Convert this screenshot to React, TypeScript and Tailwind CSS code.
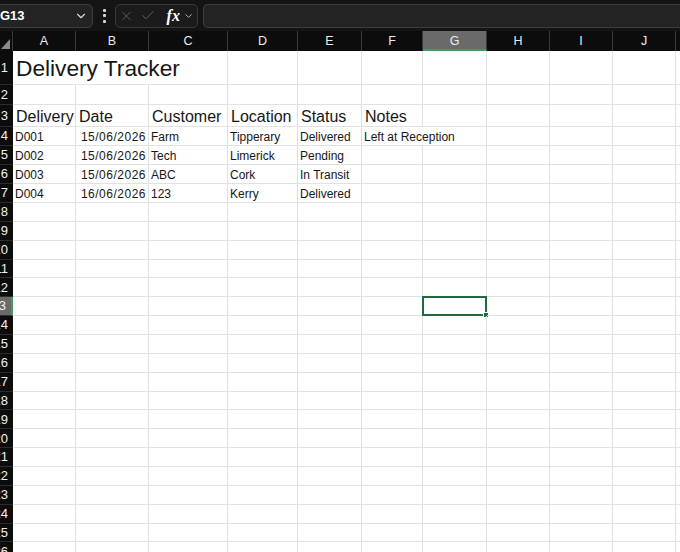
import { X, Check, ChevronDown } from "lucide-react";

type CellDef = { text?: string; span?: number; kind?: "title" | "head" | "data" | "date" };

const COLS = ["A", "B", "C", "D", "E", "F", "G", "H", "I", "J"];
const WIDTHS = [63, 73, 79, 70, 64, 61, 64, 63, 63, 63];

// row definitions: number, height class, cells from column A onwards
const ROWS: { n: number; h: string; cells: CellDef[] }[] = [
  { n: 1, h: "h-[34px]", cells: [{ text: "Delivery Tracker", span: 3, kind: "title" }] },
  { n: 2, h: "h-[20px]", cells: [] },
  {
    n: 3,
    h: "h-[22px]",
    cells: ["Delivery", "Date", "Customer", "Location", "Status", "Notes"].map((t) => ({ text: t, kind: "head" as const })),
  },
  {
    n: 4,
    h: "h-[19px]",
    cells: [
      { text: "D001" },
      { text: "15/06/2026", kind: "date" },
      { text: "Farm" },
      { text: "Tipperary" },
      { text: "Delivered" },
      { text: "Left at Reception", span: 2 },
    ],
  },
  {
    n: 5,
    h: "h-[19px]",
    cells: [{ text: "D002" }, { text: "15/06/2026", kind: "date" }, { text: "Tech" }, { text: "Limerick" }, { text: "Pending" }],
  },
  {
    n: 6,
    h: "h-[19px]",
    cells: [{ text: "D003" }, { text: "15/06/2026", kind: "date" }, { text: "ABC" }, { text: "Cork" }, { text: "In Transit" }],
  },
  {
    n: 7,
    h: "h-[19px]",
    cells: [{ text: "D004" }, { text: "16/06/2026", kind: "date" }, { text: "123" }, { text: "Kerry" }, { text: "Delivered" }],
  },
  ...Array.from({ length: 19 }, (_, i) => ({ n: 8 + i, h: "h-[18.87px]", cells: [] as CellDef[] })),
];

function textClass(kind?: CellDef["kind"]) {
  if (kind === "title") return "text-[22.7px] leading-none pl-[3px] pb-[4px]";
  if (kind === "head") return "text-[16px] leading-none pl-[3px] pb-[1px]";
  if (kind === "date") return "text-[12px] leading-none tracking-[0.5px] justify-end pr-[2px] pb-[2px]";
  return "text-[12px] leading-none pl-[2px] pb-[2px]";
}

function SheetRow({ n, h, cells }: { n: number; h: string; cells: CellDef[] }) {
  const selected = n === 13;
  const out: React.ReactNode[] = [];
  let col = 0;
  let ci = 0;
  while (col < COLS.length) {
    const def = cells[ci] ?? {};
    const span = def.span ?? 1;
    const w = WIDTHS.slice(col, col + span).reduce((a, b) => a + b, 0);
    const isSel = selected && COLS[col] === "G";
    out.push(
      <div
        key={col}
        style={{ width: w }}
        className={`relative shrink-0 flex items-end whitespace-nowrap border-r border-b border-[#e1e1e1] text-[#161616] ${textClass(def.kind)}`}
      >
        {def.text}
        {isSel && (
          <>
            <div className="absolute -left-px -top-px -right-px -bottom-px border-2 border-[#1f6b3d]" />
            <div className="absolute -right-[3px] -bottom-[3px] w-[6px] h-[6px] bg-[#1f6b3d] border border-white" />
          </>
        )}
      </div>
    );
    col += span;
    ci += 1;
  }
  return (
    <div className={`flex ${h}`}>
      <div
        className={`w-[13px] shrink-0 flex items-center justify-end pr-[5px] overflow-hidden text-[13px] text-[#f0f0f0] border-b border-[#2c2c2c] ${
          selected ? "bg-[#6a6a6a] border-r-2 border-r-[#3f9a60]" : "bg-[#0c0c0c]"
        }`}
      >
        {n}
      </div>
      {out}
      <div className="flex-1 border-b border-[#e1e1e1]" />
    </div>
  );
}

export default function App() {
  return (
    <div className="w-[680px] h-[552px] overflow-hidden bg-white font-['Liberation_Sans',Arial,sans-serif]">
      {/* Toolbar: name box + formula bar */}
      <div className="h-[31px] bg-[#141414] flex items-center">
        <div className="ml-[-6px] w-[99px] h-[24px] shrink-0 rounded-[5px] border border-[#3e3e3e] bg-[#232323] flex items-center justify-between pl-[5px] pr-[4px]">
          <span className="text-[13px] font-bold text-white">G13</span>
          <ChevronDown size={14} strokeWidth={2} className="text-[#d8d8d8]" />
        </div>
        <div className="w-[22px] shrink-0 flex flex-col items-center gap-[2.5px]">
          <span className="w-[3px] h-[3px] bg-[#d6d6d6] rounded-[1px]" />
          <span className="w-[3px] h-[3px] bg-[#d6d6d6] rounded-[1px]" />
          <span className="w-[3px] h-[3px] bg-[#d6d6d6] rounded-[1px]" />
        </div>
        <div className="w-[83px] h-[24px] shrink-0 rounded-[5px] border border-[#3a3a3a] bg-[#1b1b1b] flex items-center pl-[3px] pr-[3px]">
          <X size={16} strokeWidth={1.3} className="text-[#6c6c6c]" />
          <Check size={17} strokeWidth={1.3} className="text-[#6c6c6c] ml-[6px]" />
          <span className="ml-[11px] text-[16px] font-bold italic text-white font-['Liberation_Serif',serif] leading-none">fx</span>
          <ChevronDown size={12} strokeWidth={1.8} className="text-[#cfcfcf] ml-[3px]" />
        </div>
        <div className="ml-[5px] flex-1 h-[24px] rounded-l-[5px] border border-r-0 border-[#3e3e3e] bg-[#232323]" />
      </div>

      {/* Column headers */}
      <div className="h-[20px] flex bg-[#0c0c0c]">
        <div className="w-[13px] shrink-0 relative border-r border-[#3a3a3a]">
          <svg className="absolute right-[2px] bottom-[2px]" width="9" height="10" viewBox="0 0 9 10">
            <polygon points="9,0 9,10 0,10" fill="#8a8a8a" />
          </svg>
        </div>
        {COLS.map((c, i) => (
          <div
            key={c}
            style={{ width: WIDTHS[i] }}
            className={`shrink-0 flex items-center justify-center text-[12.5px] text-[#ececec] border-r border-[#3a3a3a] ${
              c === "G" ? "bg-[#6a6a6a] border-b-2 border-b-[#3f9a60] pt-[2px]" : ""
            }`}
          >
            {c}
          </div>
        ))}
        <div className="flex-1" />
      </div>

      {/* Cells */}
      {ROWS.map((r) => (
        <SheetRow key={r.n} {...r} />
      ))}
    </div>
  );
}
